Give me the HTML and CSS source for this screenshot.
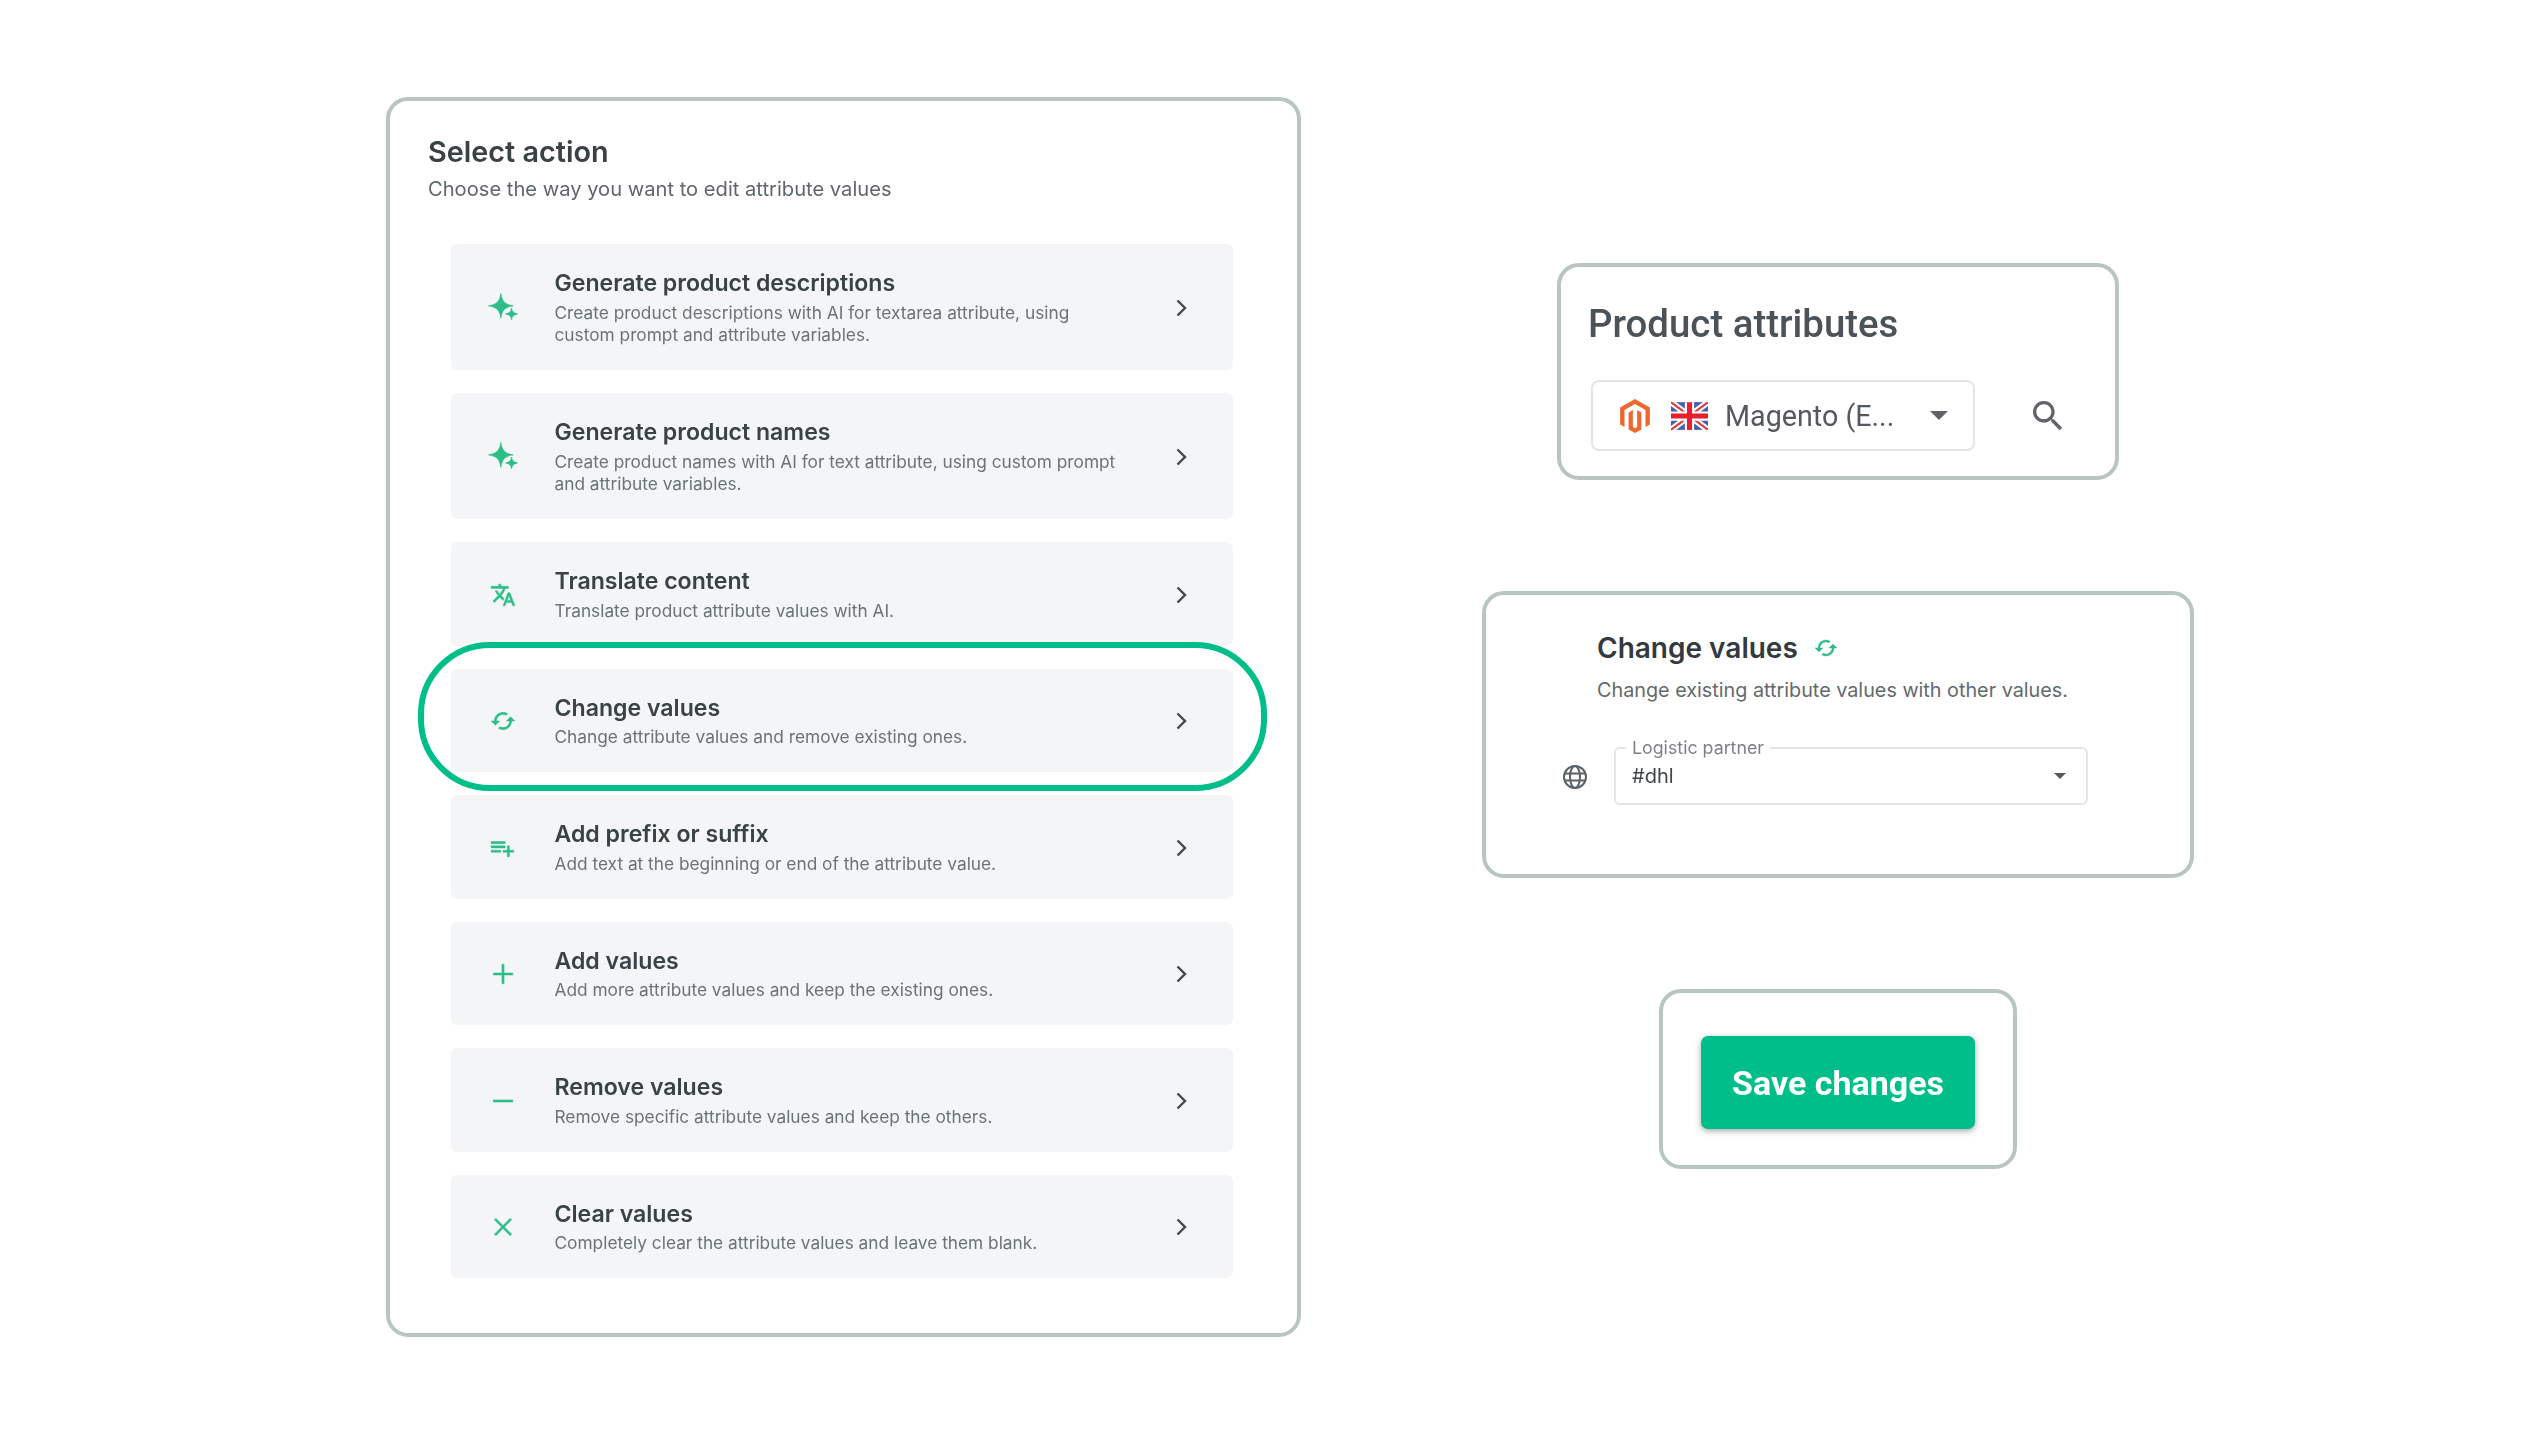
FILE: index.html
```html
<!DOCTYPE html>
<html lang="en">
<head>
    <meta charset="UTF-8">
    <title>Select action</title>
    <link rel="stylesheet" href="styles.css">
</head>
<body>

<svg class="sprite" width="0" height="0">
    <symbol id="i-sparkle" viewBox="0 0 28 28"><path d="M12 .5c1 7 3.500 10.300 11.500 11.500C15.500 13.200 13 16.500 12 23.500 11 16.500 8.500 13.200.5 12 8.500 10.800 11 7.500 12 .5z"/><path d="M22 14c.5 3.300 1.500 4.500 5.500 5.500-4 1-5 2.200-5.500 5.500-.5-3.300-1.500-4.500-5.500-5.500 4-1 5-2.200 5.500-5.500z"/></symbol>
    <symbol id="i-translate" viewBox="0 0 24 24"><path d="M12.870 15.070l-2.540-2.510.03-.03c1.740-1.940 2.980-4.170 3.710-6.530H17V4h-7V2H8v2H1v1.990h11.170C11.500 7.920 10.440 9.750 9 11.350 8.070 10.320 7.300 9.190 6.690 8h-2c.73 1.630 1.730 3.170 2.980 4.560l-5.090 5.020L4 19l5-5 3.110 3.110.76-2.040zM18.500 10h-2L12 22h2l1.120-3h4.750L21 22h2l-4.500-12zm-2.620 7l1.620-4.330L19.120 17h-3.240z"/></symbol>
    <symbol id="i-cached" viewBox="0 0 24 24"><path d="M19 8l-4 4h3c0 3.310-2.690 6-6 6-1.010 0-1.970-.25-2.800-.7l-1.460 1.460C8.970 19.540 10.430 20 12 20c4.420 0 8-3.580 8-8h3l-4-4zM6 12c0-3.310 2.690-6 6-6 1.010 0 1.970.25 2.800.7l1.460-1.460C15.030 4.460 13.570 4 12 4c-4.420 0-8 3.580-8 8H1l4 4 4-4H6z"/></symbol>
    <symbol id="i-playlist" viewBox="0 0 24 24"><path d="M14 10H1v2h13v-2zm0-4H1v2h13V6zm4 8v-4h-2v4h-4v2h4v4h2v-4h4v-2h-4zM1 16h9v-2H1v2z"/></symbol>
    <symbol id="i-plus" viewBox="0 0 24 24"><path d="M11 3h2v8h8v2h-8v8h-2v-8H3v-2h8z"/></symbol>
    <symbol id="i-minus" viewBox="0 0 24 24"><path d="M3 11h18v2H3z"/></symbol>
    <symbol id="i-close" viewBox="0 0 24 24"><path d="M5.400 4L12 10.600 18.600 4 20 5.400 13.400 12l6.600 6.600-1.400 1.400-6.600-6.600L5.400 20 4 18.600l6.600-6.600L4 5.400z"/></symbol>
    <symbol id="i-chevron" viewBox="0 0 12 18"><path d="M2.500 1.500l7.500 7.500-7.500 7.500" fill="none" stroke="#41494d" stroke-width="2.400"/></symbol>
</svg>

<div class="page">

    <section class="card action-card">
        <h2 class="action-title">Select action</h2>
        <p class="action-sub">Choose the way you want to edit attribute values</p>

        <div class="action-list">
            <div class="action">
                <svg class="action-icon icon-sparkle"><use href="#i-sparkle"/></svg>
                <div class="action-text">
                    <h3>Generate product descriptions</h3>
                    <p>Create product descriptions with AI for textarea attribute, using custom prompt and attribute variables.</p>
                </div>
                <svg class="chevron"><use href="#i-chevron"/></svg>
            </div>
            <div class="action">
                <svg class="action-icon icon-sparkle"><use href="#i-sparkle"/></svg>
                <div class="action-text">
                    <h3>Generate product names</h3>
                    <p>Create product names with AI for text attribute, using custom prompt and attribute variables.</p>
                </div>
                <svg class="chevron"><use href="#i-chevron"/></svg>
            </div>
            <div class="action">
                <svg class="action-icon"><use href="#i-translate"/></svg>
                <div class="action-text">
                    <h3>Translate content</h3>
                    <p>Translate product attribute values with AI.</p>
                </div>
                <svg class="chevron"><use href="#i-chevron"/></svg>
            </div>
            <div class="action action-marked">
                <svg class="action-icon"><use href="#i-cached"/></svg>
                <div class="action-text">
                    <h3>Change values</h3>
                    <p>Change attribute values and remove existing ones.</p>
                </div>
                <svg class="chevron"><use href="#i-chevron"/></svg>
            </div>
            <div class="action">
                <svg class="action-icon"><use href="#i-playlist"/></svg>
                <div class="action-text">
                    <h3>Add prefix or suffix</h3>
                    <p>Add text at the beginning or end of the attribute value.</p>
                </div>
                <svg class="chevron"><use href="#i-chevron"/></svg>
            </div>
            <div class="action">
                <svg class="action-icon"><use href="#i-plus"/></svg>
                <div class="action-text">
                    <h3>Add values</h3>
                    <p>Add more attribute values and keep the existing ones.</p>
                </div>
                <svg class="chevron"><use href="#i-chevron"/></svg>
            </div>
            <div class="action">
                <svg class="action-icon"><use href="#i-minus"/></svg>
                <div class="action-text">
                    <h3>Remove values</h3>
                    <p>Remove specific attribute values and keep the others.</p>
                </div>
                <svg class="chevron"><use href="#i-chevron"/></svg>
            </div>
            <div class="action">
                <svg class="action-icon"><use href="#i-close"/></svg>
                <div class="action-text">
                    <h3>Clear values</h3>
                    <p>Completely clear the attribute values and leave them blank.</p>
                </div>
                <svg class="chevron"><use href="#i-chevron"/></svg>
            </div>
        </div>
    </section>

    <div class="side">

        <section class="card attr-card">
            <h2 class="attr-title">Product attributes</h2>
            <div class="attr-row">
                <div class="store-select">
                    <svg class="magento" viewBox="0 0 24 24"><path d="M12 0L1.500 6v12l3.100 1.800V7.800L12 3.500l7.400 4.300v12l3.100-1.800V6z"/><path d="M13.500 19.800L12 20.700l-1.500-.9V7.800L7.500 9.500v12L12 24l4.500-2.500v-12l-3-1.700z"/></svg>
                    <svg class="flag" viewBox="0 0 36 27">
                        <rect width="36" height="27" fill="#4a5fa8"/>
                        <path d="M0 0l36 27M36 0L0 27" stroke="#fff" stroke-width="6"/>
                        <path d="M0 0l36 27M36 0L0 27" stroke="#e2383f" stroke-width="2"/>
                        <path d="M18 0v27M0 13.500h36" stroke="#fff" stroke-width="9"/>
                        <path d="M18 0v27M0 13.500h36" stroke="#e8202c" stroke-width="5"/>
                    </svg>
                    <span class="store-name">Magento (E...</span>
                    <span class="caret"></span>
                </div>
                <svg class="search" viewBox="0 0 24 24"><path d="M15.500 14h-.79l-.28-.27C15.410 12.590 16 11.110 16 9.500 16 5.910 13.090 3 9.500 3S3 5.910 3 9.500 5.910 16 9.500 16c1.610 0 3.090-.59 4.230-1.570l.27.28v.79l5 4.990L20.490 19l-4.990-5zm-6 0C7.010 14 5 11.990 5 9.500S7.010 5 9.500 5 14 7.010 14 9.500 11.990 14 9.500 14z"/></svg>
            </div>
        </section>

        <section class="card change-card">
            <div class="change-head">
                <h2>Change values</h2>
                <svg class="change-icon"><use href="#i-cached"/></svg>
            </div>
            <p class="change-sub">Change existing attribute values with other values.</p>
            <div class="change-row">
                <svg class="globe" viewBox="0 0 26 26" fill="none" stroke="#5b6367" stroke-width="2">
                    <circle cx="13" cy="13" r="11"/>
                    <ellipse cx="13" cy="13" rx="5" ry="11"/>
                    <path d="M2.500 9.500h21M2.500 16.500h21"/>
                </svg>
                <fieldset class="field">
                    <legend>Logistic partner</legend>
                    <span class="field-value">#dhl</span>
                    <span class="caret caret-small"></span>
                </fieldset>
            </div>
        </section>

        <section class="card save-card">
            <button class="save-btn">Save changes</button>
        </section>

    </div>
</div>

</body>
</html>
```

FILE: styles.css
```css
/* Page */
body {
    margin: 0;
    background-color: #fff;
    font-family: Inter, "Liberation Sans", sans-serif;
    color: #3a4246;
}

.sprite {
    position: absolute;
}

.page {
    display: flex;
    align-items: flex-start;
    gap: 181px;
    padding: 97px 0 0 386px;
    filter: blur(0.6px);
}

.card {
    box-sizing: border-box;
    border: 4px solid #b9c5c2;
    border-radius: 22px;
    background-color: #fff;
}

/* Left card */
.action-card {
    width: 915px;
    height: 1240px;
    padding: 34px 64px 0 38px;
}

.action-title {
    margin: 0;
    font-size: 28.8px;
    line-height: 34px;
    font-weight: 600;
}

.action-sub {
    margin: 8px 0 0;
    font-size: 20.15px;
    line-height: 24px;
    color: #5f676b;
}

.action-list {
    display: flex;
    flex-direction: column;
    gap: 23px;
    margin: 43px 0 0 23px;
}

.action {
    position: relative;
    display: flex;
    align-items: center;
    padding: 25px 46px 23.5px 39px;
    background-color: #f3f5f7;
    border-radius: 6px;
}

.action-icon {
    flex: none;
    width: 26px;
    height: 26px;
    fill: #2dbd87;
    stroke: #2dbd87;
    stroke-width: 0.4;
}

.icon-sparkle {
    width: 30px;
    height: 30px;
    margin: 0 -2px;
    stroke-width: 0.7;
}

.action-text {
    flex: 1;
    margin: 0 50px 0 38.5px;
}

.action-text h3 {
    margin: 0 0 4.5px;
    font-size: 23.1px;
    line-height: 28px;
    font-weight: 600;
}

.action-text p {
    margin: 0;
    font-size: 17.3px;
    line-height: 22.5px;
    color: #6b7377;
}

.chevron {
    flex: none;
    width: 12px;
    height: 18px;
}

/* Green ring round "Change values" */
.action-marked::after {
    content: "";
    position: absolute;
    top: -27px;
    right: -34px;
    bottom: -19px;
    left: -33px;
    border: 6px solid #00be8a;
    border-radius: 72px;
}

/* Right column */
.side {
    display: flex;
    flex-direction: column;
    align-items: center;
    width: 712px;
    padding-top: 166px;
}

.attr-card {
    width: 562px;
    height: 217px;
    margin-bottom: 111px;
    padding: 34px 30px 0 30px;
}

.attr-title {
    margin: 0 0 0 -3px;
    font-family: Roboto, sans-serif;
    font-size: 38.4px;
    line-height: 46px;
    font-weight: 500;
    color: #4c5358;
}

.attr-row {
    display: flex;
    align-items: center;
    margin-top: 33px;
}

.store-select {
    box-sizing: border-box;
    display: flex;
    align-items: center;
    width: 384px;
    height: 71px;
    padding: 0 25px 0 25px;
    border: 2px solid #e3e6e8;
    border-radius: 8px;
}

.magento {
    flex: none;
    width: 34px;
    height: 40px;
    fill: #ee672f;
}

.flag {
    flex: none;
    width: 37px;
    height: 28px;
    margin-left: 19px;
}

.store-name {
    flex: 1;
    margin-left: 17px;
    font-family: Roboto, sans-serif;
    font-size: 28.7px;
    color: #53595e;
}

.caret {
    flex: none;
    width: 0;
    height: 0;
    border-left: 9px solid transparent;
    border-right: 9px solid transparent;
    border-top: 9px solid #5e6468;
}

.search {
    flex: none;
    width: 40px;
    height: 40px;
    margin-left: 53px;
    fill: #5f6568;
}

.change-card {
    width: 712px;
    height: 287px;
    margin-bottom: 111px;
    padding: 35px 0 0 111px;
}

.change-head {
    display: flex;
    align-items: center;
    gap: 16px;
}

.change-head h2 {
    margin: 0;
    font-size: 28px;
    line-height: 36px;
    font-weight: 600;
    color: #33393e;
}

.change-icon {
    width: 24px;
    height: 24px;
    fill: #2dbd87;
    stroke: #2dbd87;
    stroke-width: 0.4;
}

.change-sub {
    margin: 11px 0 0;
    font-size: 19.8px;
    line-height: 26px;
    color: #62696d;
}

.change-row {
    display: flex;
    align-items: flex-end;
    margin: 35px 0 0 -35px;
}

.globe {
    flex: none;
    width: 26px;
    height: 26px;
    margin-bottom: 15px;
}

.field {
    box-sizing: border-box;
    display: flex;
    align-items: center;
    width: 474px;
    height: 67px;
    margin: 0 0 0 26px;
    padding: 0 20px 9px 16px;
    border: 2px solid #e3e6e8;
    border-radius: 6px;
}

.field legend {
    margin-left: -6px;
    padding: 0 6px;
    font-size: 17.8px;
    line-height: 20px;
    color: #7b8286;
}

.field-value {
    flex: 1;
    font-size: 20px;
    color: #3f464a;
}

.caret-small {
    border-left-width: 6px;
    border-right-width: 6px;
    border-top-width: 6px;
    border-top-color: #55595c;
}

.save-card {
    display: flex;
    justify-content: center;
    width: 358px;
    height: 180px;
    padding-top: 43px;
}

.save-btn {
    width: 274px;
    height: 93px;
    border: none;
    border-radius: 7px;
    background-color: #00be8a;
    box-shadow: 0 2px 6px rgba(0, 0, 0, 0.35);
    font-family: Roboto, sans-serif;
    font-size: 34px;
    font-weight: 700;
    color: #fff;
}
```
